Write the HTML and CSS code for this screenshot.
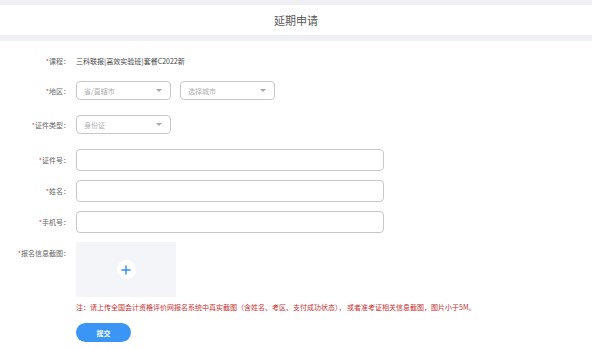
FILE: index.html
```html
<!DOCTYPE html>
<html lang="zh-CN">
<head>
<meta charset="utf-8">
<title>延期申请</title>
<link rel="stylesheet" href="styles.css">
</head>
<body>
<header class="topbar">延期申请</header>
<main class="panel">
  <div class="row row-course">
    <label class="lbl"><span class="req">*</span>课程：</label>
    <div class="value">三科联报[高效实验班]套餐C2022新</div>
  </div>
  <div class="row row-region">
    <label class="lbl"><span class="req">*</span>地区：</label>
    <div class="selects">
      <div class="select"><span>省/直辖市</span><i class="caret"></i></div>
      <div class="select"><span>选择城市</span><i class="caret"></i></div>
    </div>
  </div>
  <div class="row row-type">
    <label class="lbl"><span class="req">*</span>证件类型：</label>
    <div class="select"><span>身份证</span><i class="caret"></i></div>
  </div>
  <div class="row row-input">
    <label class="lbl"><span class="req">*</span>证件号：</label>
    <div class="input"></div>
  </div>
  <div class="row row-input">
    <label class="lbl"><span class="req">*</span>姓名：</label>
    <div class="input"></div>
  </div>
  <div class="row row-input">
    <label class="lbl"><span class="req">*</span>手机号：</label>
    <div class="input"></div>
  </div>
  <div class="row row-upload">
    <label class="lbl"><span class="req">*</span>报名信息截图：</label>
    <div class="upload">
      <div class="plus">
        <svg width="10" height="10" viewBox="0 0 10 10"><path d="M5 0.5V9.5M0.5 5H9.5" stroke="#2f8ef0" stroke-width="1.4" fill="none"/></svg>
      </div>
    </div>
  </div>
  <div class="row row-note">
    <span class="lbl"></span>
    <p class="note">注：请上传全国会计资格评价网报名系统中真实截图（含姓名、考区、支付成功状态）， 或者准考证相关信息截图，图片小于5M。</p>
  </div>
  <div class="row row-btn">
    <span class="lbl"></span>
    <button class="submit" type="button">提交</button>
  </div>
</main>
</body>
</html>
```
FILE: styles.css
```css
html, body {
  margin: 0;
  padding: 0;
}
body {
  background: #eff0f3;
  font-family: "Noto Sans CJK SC", "Liberation Sans", sans-serif;
  width: 592px;
  height: 349px;
  overflow: hidden;
}
.topbar {
  margin-top: 5px;
  height: 30px;
  background: #fff;
  color: #555;
  font-size: 11px;
  display: flex;
  align-items: center;
  justify-content: center;
}
.panel {
  margin-top: 6px;
  background: #fff;
  height: 320px;
  padding-top: 10px;
  box-sizing: border-box;
  display: flex;
  flex-direction: column;
}
.row {
  display: flex;
  align-items: center;
  font-size: 7px;
}
.lbl {
  width: 70px;
  flex: none;
  text-align: right;
  color: #666;
  margin-right: 6px;
  white-space: nowrap;
}
.req {
  color: #e3424d;
}
.value {
  color: #444;
}
.row-course {
  height: 19px;
  margin-bottom: 11px;
}
.row-region {
  margin-bottom: 15px;
}
.row-type {
  margin-bottom: 15px;
}
.row-input {
  margin-bottom: 9px;
}
.selects {
  display: flex;
  gap: 9px;
}
.select {
  width: 95px;
  height: 19px;
  box-sizing: border-box;
  border: 1px solid #c8c8c8;
  border-radius: 4px;
  display: flex;
  align-items: center;
  justify-content: space-between;
  padding: 0 8px 0 7px;
  color: #b0b0b0;
}
.caret {
  width: 0;
  height: 0;
  border-left: 3px solid transparent;
  border-right: 3px solid transparent;
  border-top: 3px solid #a8a8a8;
}
.input {
  width: 308px;
  height: 22px;
  box-sizing: border-box;
  border: 1px solid #c8c8c8;
  border-radius: 4px;
}
.row-upload {
  align-items: flex-start;
}
.row-upload .lbl {
  padding-top: 6px;
}
.upload {
  width: 100px;
  height: 55px;
  background: #f4f5f8;
  display: flex;
  align-items: center;
  justify-content: center;
}
.plus {
  width: 19px;
  height: 19px;
  border-radius: 50%;
  background: #fff;
  display: flex;
  align-items: center;
  justify-content: center;
}
.row-note {
  height: 20px;
}
.note {
  margin: 0;
  color: #c8302f;
  white-space: nowrap;
}
.row-btn {
  margin-top: 6px;
}
.submit {
  width: 55px;
  height: 19px;
  border: none;
  border-radius: 10px;
  background: #3b95f5;
  color: #fff;
  font-family: inherit;
  font-size: 7px;
  font-weight: bold;
  padding: 0;
}
```
